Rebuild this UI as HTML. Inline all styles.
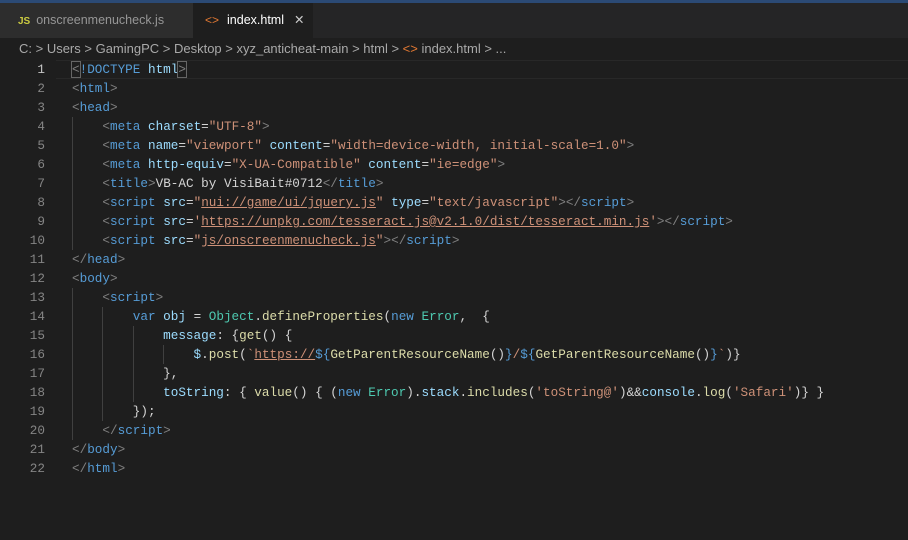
<!DOCTYPE html>
<html><head><style>
body{margin:0;width:908px;height:540px;background:#1e1e1e;overflow:hidden;font-family:"Liberation Sans",sans-serif;position:relative}
.top{position:absolute;left:0;top:0;width:908px;height:3px;background:#2b4a75}
.tabs{position:absolute;top:3px;left:0;width:908px;height:35px;background:#252526}
.tab{position:absolute;top:0;height:35px;line-height:35px;font-size:12.5px}
.t1{left:0;width:193px;background:#2d2d2d;color:#969696}
.t2{left:193px;width:120px;background:#1e1e1e;color:#fff}
.crumb{position:absolute;top:38px;left:19px;height:22px;line-height:22px;font-size:13px;color:#a9a9a9;white-space:pre}
.ed{position:absolute;top:60px;left:0;font-family:"Liberation Mono",monospace;font-size:12.67px}
.ln{position:absolute;left:0;width:45px;text-align:right;color:#858585}
.code{position:absolute;left:72px;color:#d4d4d4}
.row{height:19px;line-height:19px;white-space:pre}
.g{color:#808080}.t{color:#569cd6}.a{color:#9cdcfe}.s{color:#ce9178}.w{color:#d4d4d4}
.k{color:#569cd6}.v{color:#9cdcfe}.c{color:#4ec9b0}.f{color:#dcdcaa}
.u{text-decoration:underline;text-decoration-color:#ce9178}
.hl{position:absolute;left:56px;top:60px;width:852px;height:17px;border-top:1px solid #282828;border-bottom:1px solid #282828}
.guide{position:absolute;width:1px;background:#404040}
</style></head><body>
<div class="top"></div>
<div class="tabs">
<div class="tab t1"><span style="color:#cbcb41;font-weight:bold;font-size:10px;margin-left:18px">JS</span><span style="margin-left:6px">onscreenmenucheck.js</span></div>
<div class="tab t2"><span style="color:#e37933;margin-left:12px;font-size:12px">&lt;&gt;</span><span style="margin-left:8px">index.html</span><span style="margin-left:10px;color:#ccc">✕</span></div>
</div>
<div class="crumb">C: &gt; Users &gt; GamingPC &gt; Desktop &gt; xyz_anticheat-main &gt; html &gt; <span style="color:#e37933">&lt;&gt;</span> index.html &gt; ...</div>
<div class="hl"></div>
<div class="guide" style="left:72px;top:117px;height:133px"></div>
<div class="guide" style="left:72px;top:288px;height:152px"></div>
<div class="guide" style="left:102px;top:307px;height:114px"></div>
<div class="guide" style="left:133px;top:326px;height:76px"></div>
<div class="guide" style="left:163px;top:345px;height:19px"></div>
<div class="ed">
<div class="ln">
<div class="row" style="color:#c6c6c6">1</div><div class="row">2</div><div class="row">3</div><div class="row">4</div><div class="row">5</div><div class="row">6</div><div class="row">7</div><div class="row">8</div><div class="row">9</div><div class="row">10</div><div class="row">11</div><div class="row">12</div><div class="row">13</div><div class="row">14</div><div class="row">15</div><div class="row">16</div><div class="row">17</div><div class="row">18</div><div class="row">19</div><div class="row">20</div><div class="row">21</div><div class="row">22</div>
</div>
<div class="code">
<div class="row"><span class="g" style="outline:1px solid #666">&lt;</span><span class="t">!DOCTYPE</span> <span class="a">html</span><span class="g" style="outline:1px solid #666">&gt;</span></div>
<div class="row"><span class="g">&lt;</span><span class="t">html</span><span class="g">&gt;</span></div>
<div class="row"><span class="g">&lt;</span><span class="t">head</span><span class="g">&gt;</span></div>
<div class="row">    <span class="g">&lt;</span><span class="t">meta</span> <span class="a">charset</span>=<span class="s">"UTF-8"</span><span class="g">&gt;</span></div>
<div class="row">    <span class="g">&lt;</span><span class="t">meta</span> <span class="a">name</span>=<span class="s">"viewport"</span> <span class="a">content</span>=<span class="s">"width=device-width, initial-scale=1.0"</span><span class="g">&gt;</span></div>
<div class="row">    <span class="g">&lt;</span><span class="t">meta</span> <span class="a">http-equiv</span>=<span class="s">"X-UA-Compatible"</span> <span class="a">content</span>=<span class="s">"ie=edge"</span><span class="g">&gt;</span></div>
<div class="row">    <span class="g">&lt;</span><span class="t">title</span><span class="g">&gt;</span>VB-AC by VisiBait#0712<span class="g">&lt;/</span><span class="t">title</span><span class="g">&gt;</span></div>
<div class="row">    <span class="g">&lt;</span><span class="t">script</span> <span class="a">src</span>=<span class="s">"<span class="u">nui://game/ui/jquery.js</span>"</span> <span class="a">type</span>=<span class="s">"text/javascript"</span><span class="g">&gt;&lt;/</span><span class="t">script</span><span class="g">&gt;</span></div>
<div class="row">    <span class="g">&lt;</span><span class="t">script</span> <span class="a">src</span>=<span class="s">'<span class="u">https://unpkg.com/tesseract.js@v2.1.0/dist/tesseract.min.js</span>'</span><span class="g">&gt;&lt;/</span><span class="t">script</span><span class="g">&gt;</span></div>
<div class="row">    <span class="g">&lt;</span><span class="t">script</span> <span class="a">src</span>=<span class="s">"<span class="u">js/onscreenmenucheck.js</span>"</span><span class="g">&gt;&lt;/</span><span class="t">script</span><span class="g">&gt;</span></div>
<div class="row"><span class="g">&lt;/</span><span class="t">head</span><span class="g">&gt;</span></div>
<div class="row"><span class="g">&lt;</span><span class="t">body</span><span class="g">&gt;</span></div>
<div class="row">    <span class="g">&lt;</span><span class="t">script</span><span class="g">&gt;</span></div>
<div class="row">        <span class="k">var</span> <span class="v">obj</span> = <span class="c">Object</span>.<span class="f">defineProperties</span>(<span class="k">new</span> <span class="c">Error</span>,  {</div>
<div class="row">            <span class="v">message</span>: {<span class="f">get</span>() {</div>
<div class="row">                <span class="v">$</span>.<span class="f">post</span>(<span class="s">`<span class="u">https://</span></span><span class="k">${</span><span class="f">GetParentResourceName</span>()<span class="k">}</span><span class="s">/</span><span class="k">${</span><span class="f">GetParentResourceName</span>()<span class="k">}</span><span class="s">`</span>)}</div>
<div class="row">            },</div>
<div class="row">            <span class="v">toString</span>: { <span class="f">value</span>() { (<span class="k">new</span> <span class="c">Error</span>).<span class="v">stack</span>.<span class="f">includes</span>(<span class="s">'toString@'</span>)&amp;&amp;<span class="v">console</span>.<span class="f">log</span>(<span class="s">'Safari'</span>)} }</div>
<div class="row">        });</div>
<div class="row">    <span class="g">&lt;/</span><span class="t">script</span><span class="g">&gt;</span></div>
<div class="row"><span class="g">&lt;/</span><span class="t">body</span><span class="g">&gt;</span></div>
<div class="row"><span class="g">&lt;/</span><span class="t">html</span><span class="g">&gt;</span></div>
</div>
</div>
</body></html>
